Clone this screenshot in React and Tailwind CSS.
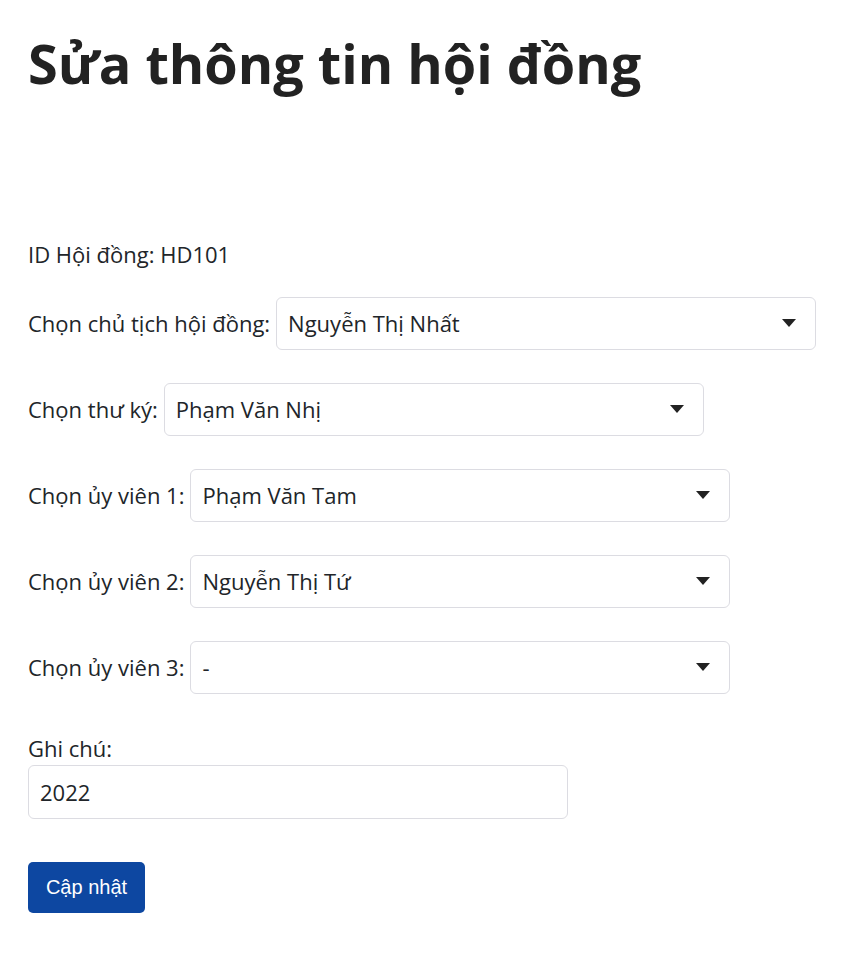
import React from "react";

function Caret() {
  return (
    <svg width="14" height="8" viewBox="0 0 14 8" className="shrink-0">
      <path d="M0 0 L14 0 L7 8 Z" fill="#222" />
    </svg>
  );
}

function SelectRow({ label, value }) {
  return (
    <div className="flex items-center">
      <span className="mr-[6px]">{label}</span>
      <div className="flex h-[53px] w-[540px] items-center justify-between rounded-[6px] border border-[#dcdce2] pl-[11px] pr-[19px]">
        <span>{value}</span>
        <Caret />
      </div>
    </div>
  );
}

export default function App() {
  return (
    <div className="min-h-[964px] bg-white px-[28px] text-[22px] leading-[30px] text-[#212529] [font-family:'Open_Sans',sans-serif]">
      <h1 className="pt-[31px] text-[54px] font-bold leading-[1.2] text-[#222]">Sửa thông tin hội đồng</h1>
      <div className="mt-[143px] leading-[30px]">ID Hội đồng: HD101</div>
      <div className="mt-[28px] flex flex-col gap-[33px]">
        <SelectRow label="Chọn chủ tịch hội đồng:" value="Nguyễn Thị Nhất" />
        <SelectRow label="Chọn thư ký:" value="Phạm Văn Nhị" />
        <SelectRow label="Chọn ủy viên 1:" value="Phạm Văn Tam" />
        <SelectRow label="Chọn ủy viên 2:" value="Nguyễn Thị Tứ" />
        <SelectRow label="Chọn ủy viên 3:" value="-" />
      </div>
      <div className="mt-[39px] leading-[30px]">Ghi chú:</div>
      <div className="mt-[2px] flex h-[54px] w-[540px] items-center rounded-[6px] border border-[#dcdce2] pl-[11px]">2022</div>
      <button className="mt-[43px] h-[51px] w-[117px] rounded-[5px] bg-[#0d47a1] text-[20px] text-white [font-family:'Liberation_Sans',Arial,sans-serif]">Cập nhật</button>
    </div>
  );
}
